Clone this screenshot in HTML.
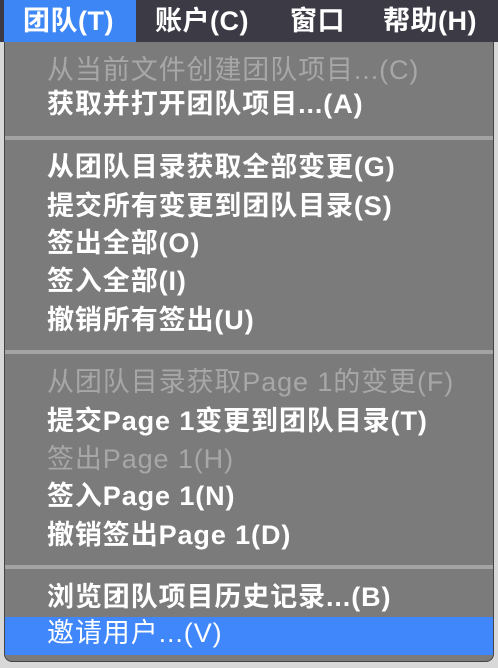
<!DOCTYPE html>
<html><head><meta charset="utf-8"><style>
html,body{margin:0;padding:0;width:498px;height:668px;overflow:hidden;background:#d8d8d8;}
body{font-family:"Liberation Sans","Noto Sans CJK SC",sans-serif;position:relative;}
.bar{position:absolute;left:0;top:0;width:498px;height:42px;background:#3c3b45;}
.bar span{position:absolute;top:0;height:42px;line-height:42px;color:#fff;font-size:27px;font-weight:bold;letter-spacing:0.5px;}
.sel{background:#3d86f5;}
.menu{position:absolute;left:4px;top:42px;width:490px;height:620px;background:#7b7b7b;border-radius:0 0 8px 8px;border:1px solid #444;border-top:none;box-sizing:border-box;overflow:hidden;}
.it{position:absolute;left:42px;font-size:27px;font-weight:bold;color:#fff;white-space:nowrap;line-height:32px;letter-spacing:0.9px;}
.dis{color:#a7a7a7;font-weight:normal;}
.sep{position:absolute;left:0;right:0;height:4px;background:#a3a3a3;}
.hl{position:absolute;left:0;right:0;top:575px;height:38px;background:#3f87fb;}
</style></head><body>
<div class="bar">
<span class="sel" style="left:4px;width:132px;text-indent:19px">团队(T)</span>
<span style="left:155px">账户(C)</span>
<span style="left:290px">窗口</span>
<span style="left:383px">帮助(H)</span>
</div>
<div class="menu">
<div class="it dis" style="top:12px">从当前文件创建团队项目...(C)</div>
<div class="it" style="top:46px">获取并打开团队项目...(A)</div>
<div class="sep" style="top:94px"></div>
<div class="it" style="top:109px">从团队目录获取全部变更(G)</div>
<div class="it" style="top:148px">提交所有变更到团队目录(S)</div>
<div class="it" style="top:185px">签出全部(O)</div>
<div class="it" style="top:223px">签入全部(I)</div>
<div class="it" style="top:262px">撤销所有签出(U)</div>
<div class="sep" style="top:308px"></div>
<div class="it dis" style="top:324px">从团队目录获取Page 1的变更(F)</div>
<div class="it" style="top:363px">提交Page 1变更到团队目录(T)</div>
<div class="it dis" style="top:401px">签出Page 1(H)</div>
<div class="it" style="top:438px">签入Page 1(N)</div>
<div class="it" style="top:477px">撤销签出Page 1(D)</div>
<div class="sep" style="top:523px"></div>
<div class="it" style="top:539px">浏览团队项目历史记录...(B)</div>
<div class="hl"></div>
<div class="it" style="top:575px;font-weight:normal">邀请用户...(V)</div>
</div>
</body></html>
